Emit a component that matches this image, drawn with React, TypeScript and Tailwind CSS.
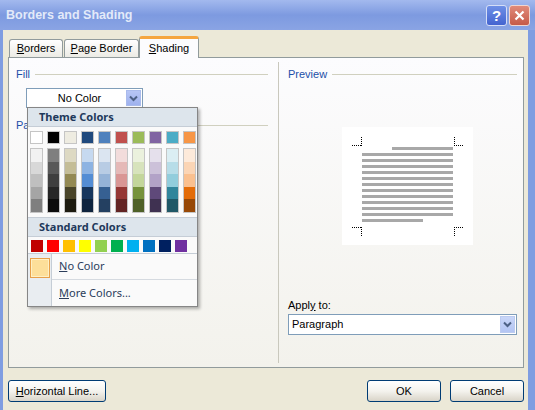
import React from 'react'

const dialogFont = { fontFamily: '"Liberation Sans", Arial, sans-serif' }
const officeFont = { fontFamily: '"Noto Sans", "Open Sans", sans-serif' }

const THEME_TOP = ['#ffffff', '#000000', '#eeece1', '#1f497d', '#4f81bd', '#c0504d', '#9bbb59', '#8064a2', '#4bacc6', '#f79646']

const THEME_SHADES = [
  ['#f2f2f2', '#d8d8d8', '#bfbfbf', '#a5a5a5', '#7f7f7f'],
  ['#7f7f7f', '#595959', '#3f3f3f', '#262626', '#0c0c0c'],
  ['#ddd9c3', '#c4bd97', '#938953', '#494429', '#1d1b10'],
  ['#c6d9f0', '#8db3e2', '#548dd4', '#17365d', '#0f243e'],
  ['#dbe5f1', '#b8cce4', '#95b3d7', '#366092', '#244061'],
  ['#f2dcdb', '#e5b9b7', '#d99694', '#953734', '#632423'],
  ['#ebf1dd', '#d7e3bc', '#c3d69b', '#76923c', '#4f6128'],
  ['#e5e0ec', '#ccc1d9', '#b2a2c7', '#5f497a', '#3f3151'],
  ['#dbeef3', '#b7dde8', '#92cddc', '#31859b', '#205867'],
  ['#fdeada', '#fbd5b5', '#fac08f', '#e36c09', '#974806'],
]

const STANDARD = ['#c00000', '#ff0000', '#ffc000', '#ffff00', '#92d050', '#00b050', '#00b0f0', '#0070c0', '#002060', '#7030a0']

function Chevron() {
  return (
    <svg width="9" height="7" viewBox="0 0 9 7" fill="none">
      <path d="M1 1.5 L4.5 5 L8 1.5" stroke="#4d6185" strokeWidth="2" />
    </svg>
  )
}

// group heading: blue label followed by a thin rule
function GroupLabel({ text }: { text: string }) {
  return (
    <div className="flex items-center h-[13px]">
      <span className="text-[11px] leading-[13px] text-[#1d4fa8]">{text}</span>
      <div className="flex-1 h-px bg-[#d0d0bf] ml-[5px]" />
    </div>
  )
}

function XpButton({ children, className = '' }: { children: React.ReactNode; className?: string }) {
  return (
    <button
      className={`h-[22px] rounded-[3px] border border-[#003c74] bg-gradient-to-b from-[#ffffff] via-[#f4f3ee] to-[#d9d4c8] text-[11px] text-black ${className}`}
    >
      {children}
    </button>
  )
}

function ColorPopup() {
  return (
    <div
      className="absolute left-[27px] top-[107px] w-[171px] h-[200px] border border-[#868686] bg-[#fafafa] shadow-[2px_2px_3px_rgba(0,0,0,0.3)] flex flex-col"
      style={officeFont}
    >
      {/* Theme colors */}
      <div className="h-[19px] bg-[#dde5ec] border-b border-[#c5cdd6] pl-[11px] flex items-center text-[11px] font-bold text-[#1e395b]">
        Theme Colors
      </div>
      <div className="flex gap-[4px] pl-[2px] mt-[4px]">
        {THEME_TOP.map(c => (
          <div key={c} className="w-[13px] h-[13px] border border-[#c5c5c5]" style={{ background: c }} />
        ))}
      </div>
      <div className="flex gap-[4px] pl-[2px] mt-[4px]">
        {THEME_SHADES.map((col, i) => (
          <div key={i} className="w-[13px] border border-[#c5c5c5] flex flex-col">
            {col.map(c => (
              <div key={c} className="h-[12.6px]" style={{ background: c }} />
            ))}
          </div>
        ))}
      </div>

      {/* Standard colors */}
      <div className="mt-[4px] h-[20px] bg-[#dde5ec] border-y border-[#c5cdd6] pl-[11px] flex items-center text-[11px] font-bold text-[#1e395b]">
        Standard Colors
      </div>
      <div className="flex gap-[4px] pl-[3px] mt-[3px]">
        {STANDARD.map(c => (
          <div key={c} className="w-[12px] h-[12px]" style={{ background: c }} />
        ))}
      </div>

      {/* Menu items */}
      <div className="mt-[1px] flex-1 border-t border-[#c5cdd6] flex">
        <div className="w-[24px] bg-[#e9edf1] border-r border-[#c5cdd6] pt-[4px] pl-[2px]">
          <div className="w-[20px] h-[20px] border border-[#e8a04a] bg-[#fddf9a] shadow-[inset_0_0_0_1px_#fff0c4]" />
        </div>
        <div className="flex-1 flex flex-col text-[11px] text-[#2b3d5a]">
          <div className="h-[26px] border-b border-[#d5dae0] flex items-center pl-[7px]">
            <span><span className="underline">N</span>o Color</span>
          </div>
          <div className="flex-1 flex items-center pl-[7px]">
            <span><span className="underline">M</span>ore Colors...</span>
          </div>
        </div>
      </div>
    </div>
  )
}

function PreviewDrawing() {
  const lines = Array.from({ length: 13 }, (_, i) => i)
  return (
    <svg width="131" height="118" viewBox="0 0 131 118">
      <rect width="131" height="118" fill="#ffffff" />
      {lines.map(i => {
        const x = i === 0 ? 50 : 20
        const w = i === 0 || i === 12 ? 61 : 91
        return <rect key={i} x={x} y={20 + i * 6} width={w} height={3} fill="#a8a8a8" />
      })}
      <g stroke="#000" strokeWidth="1" strokeDasharray="1 1">
        <path d="M10 18.5 H20 M19.5 10 V19" />
        <path d="M112.5 10 V19 M112 18.5 H122" />
        <path d="M10 100.5 H20 M19.5 100 V110" />
        <path d="M112.5 100 V110 M112 100.5 H122" />
      </g>
    </svg>
  )
}

export default function App() {
  return (
    <div className="relative w-[535px] h-[410px] bg-[#7f9de1] flex flex-col overflow-hidden" style={dialogFont}>
      {/* Title bar */}
      <div className="h-[30px] flex items-center pl-[6px] pr-[5px] bg-gradient-to-b from-[#a3b9ee] via-[#7d9ae0] to-[#8aa4e4]">
        <span className="flex-1 text-[12.5px] font-bold text-[#e3eaf9]">Borders and Shading</span>
        <div className="w-[21px] h-[21px] rounded-[3px] border border-[#d5def7] bg-gradient-to-b from-[#6e8fe6] to-[#4464d0] flex items-center justify-center text-white font-bold text-[15px] leading-none">
          ?
        </div>
        <div className="ml-[2px] w-[21px] h-[21px] rounded-[3px] border border-[#f0d5cf] bg-gradient-to-b from-[#e08a7a] to-[#c65a48] flex items-center justify-center">
          <svg width="11" height="11" viewBox="0 0 11 11">
            <path d="M1.5 1.5 L9.5 9.5 M9.5 1.5 L1.5 9.5" stroke="#fff" strokeWidth="2.2" />
          </svg>
        </div>
      </div>

      {/* Dialog body */}
      <div className="flex-1 ml-[3px] mr-[7px] bg-[#ece9d8] flex flex-col">
        {/* Tabs */}
        <div className="flex items-end h-[27px] pl-[6px] text-[11px] text-black">
          <div className="w-[54px] h-[18px] border border-b-0 border-[#919b9c] rounded-t-[3px] bg-gradient-to-b from-[#ffffff] to-[#ecebe5] flex items-center justify-center">
            <span><span className="underline">B</span>orders</span>
          </div>
          <div className="ml-[1px] w-[75px] h-[18px] border border-b-0 border-[#919b9c] rounded-t-[3px] bg-gradient-to-b from-[#ffffff] to-[#ecebe5] flex items-center justify-center">
            <span><span className="underline">P</span>age Border</span>
          </div>
          <div className="relative z-10 -mb-px w-[60px] h-[22px] border border-b-0 border-[#919b9c] border-t-[3px] border-t-[#f5a640] rounded-t-[3px] bg-[#fcfcfe] flex items-center justify-center">
            <span><span className="underline">S</span>hading</span>
          </div>
        </div>

        {/* Tab panel */}
        <div className="ml-[5px] mr-[4px] h-[311px] border border-[#919b9c] bg-gradient-to-b from-[#fcfcfe] to-[#f3f2ec] flex">
          {/* Left: fill & patterns */}
          <div className="w-[269px] pl-[7px] pr-[10px] pt-[10px] flex flex-col">
            <GroupLabel text="Fill" />
            <div className="mt-[7px] ml-[10px] w-[117px] h-[20px] border border-[#7f9db9] bg-white flex items-center text-[11px]">
              <span className="flex-1 text-center pl-[6px]">No Color</span>
              <div className="w-[15px] h-[16px] mr-[1px] bg-gradient-to-b from-[#b7c6f5] to-[#9fb2ee] border border-[#aabbec] flex items-center justify-center">
                <Chevron />
              </div>
            </div>
            <div className="mt-[11px]">
              <GroupLabel text="Patterns" />
            </div>
          </div>

          {/* Right: preview */}
          <div className="flex-1 my-[4px] border-l border-[#c9c8bd] pl-[9px] pr-[6px] pt-[6px] flex flex-col">
            <GroupLabel text="Preview" />
            <div className="mt-[46px] ml-[54px]">
              <PreviewDrawing />
            </div>
            <div className="mt-[54px] text-[11px] leading-[13px] text-black">
              Appl<span className="underline">y</span> to:
            </div>
            <div className="mt-[2px] w-[229px] h-[21px] border border-[#7f9db9] bg-white flex items-center text-[11px]">
              <span className="flex-1 pl-[3px]">Paragraph</span>
              <div className="w-[15px] h-[17px] mr-[1px] bg-gradient-to-b from-[#c9d6f8] to-[#b3c5f3] border border-[#bccbf0] flex items-center justify-center">
                <Chevron />
              </div>
            </div>
          </div>
        </div>

        {/* Buttons */}
        <div className="mt-[12px] ml-[5px] mr-[4px] flex">
          <XpButton className="w-[98px]">
            <span className="underline">H</span>orizontal Line...
          </XpButton>
          <div className="flex-1" />
          <XpButton className="w-[74px]">OK</XpButton>
          <XpButton className="w-[74px] ml-[9px]">Cancel</XpButton>
        </div>
      </div>

      <ColorPopup />
    </div>
  )
}
